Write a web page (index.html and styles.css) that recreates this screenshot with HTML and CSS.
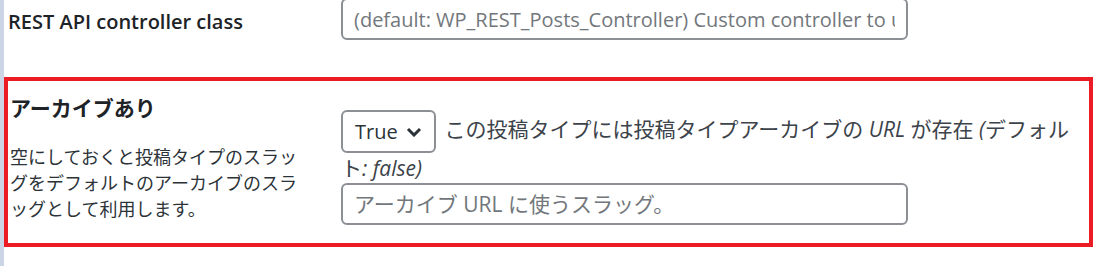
FILE: index.html
```html
<!DOCTYPE html>
<html lang="ja">
<head>
<meta charset="utf-8">
<title>Post type settings</title>
<link rel="stylesheet" href="styles.css">
</head>
<body>
<div class="page">
  <div class="strip"></div>
  <div class="rows">
    <div class="row row-rest">
      <div class="th"><label class="label label-latin" for="rest_controller">REST API controller class</label></div>
      <div class="td">
        <input id="rest_controller" class="text-input text-input-latin" type="text" placeholder="(default: WP_REST_Posts_Controller) Custom controller to use instead of WP_REST_Posts_Controller.">
      </div>
    </div>
    <div class="row row-archive">
      <div class="th">
        <label class="label" for="has_archive">アーカイブあり</label>
        <p class="field-desc">空にしておくと投稿タイプのスラッグをデフォルトのアーカイブのスラッグとして利用します。</p>
      </div>
      <div class="td">
        <div class="td-line">
          <span class="select" id="has_archive">True<svg class="chev" width="16" height="10" viewBox="0 0 16 10"><polyline points="2,2 8,8 14,2" fill="none" stroke="#2c3338" stroke-width="3" stroke-linejoin="miter" stroke-linecap="butt"/></svg></span>
          <span class="desc">この投稿タイプには投稿タイプアーカイブの <em>URL</em> が存在 <em>(</em>デフォルト<em>: false)</em></span>
        </div>
        <input class="text-input" type="text" placeholder="アーカイブ URL に使うスラッグ。">
      </div>
    </div>
  </div>
</div>
</body>
</html>
```

FILE: styles.css
```css
html, body {
  margin: 0;
  padding: 0;
  background: #ffffff;
}

body {
  font-family: "Open Sans", "Noto Sans CJK JP", sans-serif;
  color: #1d2327;
  font-size: 21px;
  overflow: hidden;
}

.page {
  display: flex;
  width: 1110px;
  height: 266px;
}

.strip {
  width: 4px;
  flex: 0 0 4px;
  background: #cbd5e6;
}

.rows {
  flex: 1;
  display: flex;
  flex-direction: column;
  margin-top: -2px;
  padding-right: 17px;
}

.row {
  display: flex;
}

.row-rest {
  align-items: flex-start;
  padding-left: 4px;
  margin-bottom: 37px;
}

.row-rest .th {
  width: 333px;
  flex: 0 0 333px;
  padding-top: 9px;
}

.label {
  font-weight: 600;
  line-height: 29px;
  display: block;
}

.label-latin {
  font-size: 20px;
}

.row-archive {
  border: 4px solid #ec1c24;
  padding-left: 2px;
}

.row-archive .th {
  width: 331px;
  flex: 0 0 331px;
  padding-top: 13px;
  padding-bottom: 21px;
}

.row-archive .label {
  font-size: 21px;
}

.field-desc {
  margin: 21px 0 0;
  width: 292px;
  font-size: 18px;
  line-height: 26px;
  color: #2c3338;
}

.row-archive .td {
  flex: 1;
  padding-top: 29px;
  padding-right: 10px;
  padding-bottom: 18px;
}

.td-line {
  line-height: 30px;
  color: #3c434a;
}

.select {
  display: inline-flex;
  align-items: center;
  justify-content: space-between;
  box-sizing: border-box;
  width: 95px;
  height: 43px;
  padding: 0 12px 0 12px;
  border: 2px solid #8c8f94;
  border-radius: 6px;
  vertical-align: middle;
  color: #2c3338;
  font-size: 20px;
  margin-right: 3px;
}

.chev {
  display: block;
}

.desc em {
  font-style: italic;
}

.text-input {
  display: block;
  box-sizing: border-box;
  width: 567px;
  height: 42px;
  margin: 0;
  padding: 0 11px;
  border: 2px solid #8c8f94;
  border-radius: 6px;
  font-family: "Open Sans", "Noto Sans CJK JP", sans-serif;
  font-size: 21px;
  color: #2c3338;
  background: #ffffff;
  outline: none;
}

.text-input-latin {
  font-size: 20px;
}

.text-input::placeholder {
  color: #72777c;
  opacity: 1;
}
```
